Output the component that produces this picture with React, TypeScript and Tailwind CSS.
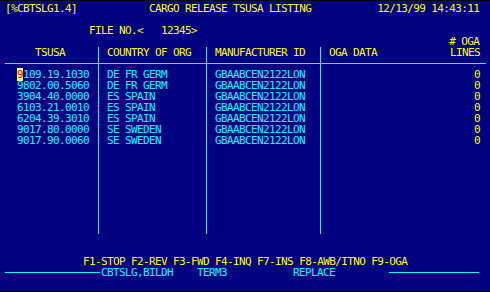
import {FC} from 'react';

const Y = 'text-[#ffff00]';
const C = 'text-[#00ffff]';

const rows = [
  {tsusa: '9109.19.1030', country: 'DE FR GERM'},
  {tsusa: '9802.00.5060', country: 'DE FR GERM'},
  {tsusa: '3904.40.0000', country: 'ES SPAIN'},
  {tsusa: '6103.21.0010', country: 'ES SPAIN'},
  {tsusa: '6204.39.3010', country: 'ES SPAIN'},
  {tsusa: '9017.80.0000', country: 'SE SWEDEN'},
  {tsusa: '9017.90.0060', country: 'SE SWEDEN'},
];

// one 11px terminal row
const Line: FC<{children?: React.ReactNode; className?: string}> = ({children, className = ''}) => (
  <div className={`h-[11px] whitespace-pre ${className}`}>{children}</div>
);

// separator row: 1px cyan rule through the middle of the cell
const Rule: FC = () => (
  <div className="flex h-[11px] flex-col">
    <div className="h-[5px]" />
    <div className="h-px bg-[#00ffff]" />
  </div>
);

const App: FC = () => {
  return (
    <div
      className="h-[292px] w-[490px] overflow-hidden border-y border-black bg-[#000080] pl-[5px] pt-[2px] text-[11px] leading-[11px] tracking-[-0.62px]"
      style={{fontFamily: '"DejaVu Sans Mono", "Liberation Mono", monospace'}}>
      <Line className={Y}>{'[%CBTSLG1.4]            CARGO RELEASE TSUSA LISTING           12/13/99 14:43:11'}</Line>
      <Line />
      <Line className={Y}>{'              FILE NO.<   12345>'}</Line>
      <Line className={Y}>{'                                                                          # OGA'}</Line>

      {/* table: rows 4..20 */}
      <div className="flex">
        <div className="w-[94px] border-r border-[#00ffff]">
          <Line className={Y}>{'     TSUSA'}</Line>
          <Rule />
          {rows.map((r, i) => (
            <Line className={C} key={r.tsusa + i}>
              {'  '}
              {i === 0 ? (
                <>
                  <span className="bg-[#ffff60] text-[#ff0000]">{r.tsusa[0]}</span>
                  {r.tsusa.slice(1)}
                </>
              ) : (
                r.tsusa
              )}
            </Line>
          ))}
          <div className="h-[88px]" />
        </div>
        <div className="w-[108px] border-r border-[#00ffff]">
          <Line className={`${Y} pl-[8px]`}>COUNTRY OF ORG</Line>
          <Rule />
          {rows.map((r, i) => (
            <Line className={`${C} pl-[8px]`} key={i}>
              {r.country}
            </Line>
          ))}
        </div>
        <div className="w-[114px] border-r border-[#00ffff]">
          <Line className={`${Y} pl-[8px]`}>MANUFACTURER ID</Line>
          <Rule />
          {rows.map((_, i) => (
            <Line className={`${C} pl-[8px]`} key={i}>
              GBAABCEN2122LON
            </Line>
          ))}
        </div>
        <div className="w-[165px]">
          <div className={`flex h-[11px] justify-between pl-[8px] pr-[6px] ${Y}`}>
            <span>OGA DATA</span>
            <span>LINES</span>
          </div>
          <Rule />
          {rows.map((_, i) => (
            <Line className={`${Y} pr-[6px] text-right`} key={i}>
              0
            </Line>
          ))}
        </div>
      </div>

      <Line />
      <Line />
      <Line className={Y}>{'             F1-STOP F2-REV F3-FWD F4-INQ F7-INS F8-AWB/ITNO F9-OGA'}</Line>
      <div className="flex h-[11px] items-center">
        <div className="h-px w-[95px] bg-[#00ffff]" />
        <div className={`whitespace-pre pl-px ${C}`}>{'CBTSLG,BILDH    TERM3           REPLACE'}</div>
        <div className="ml-[54px] h-px w-[90px] bg-[#00ffff]" />
      </div>
    </div>
  );
};

export default App;
